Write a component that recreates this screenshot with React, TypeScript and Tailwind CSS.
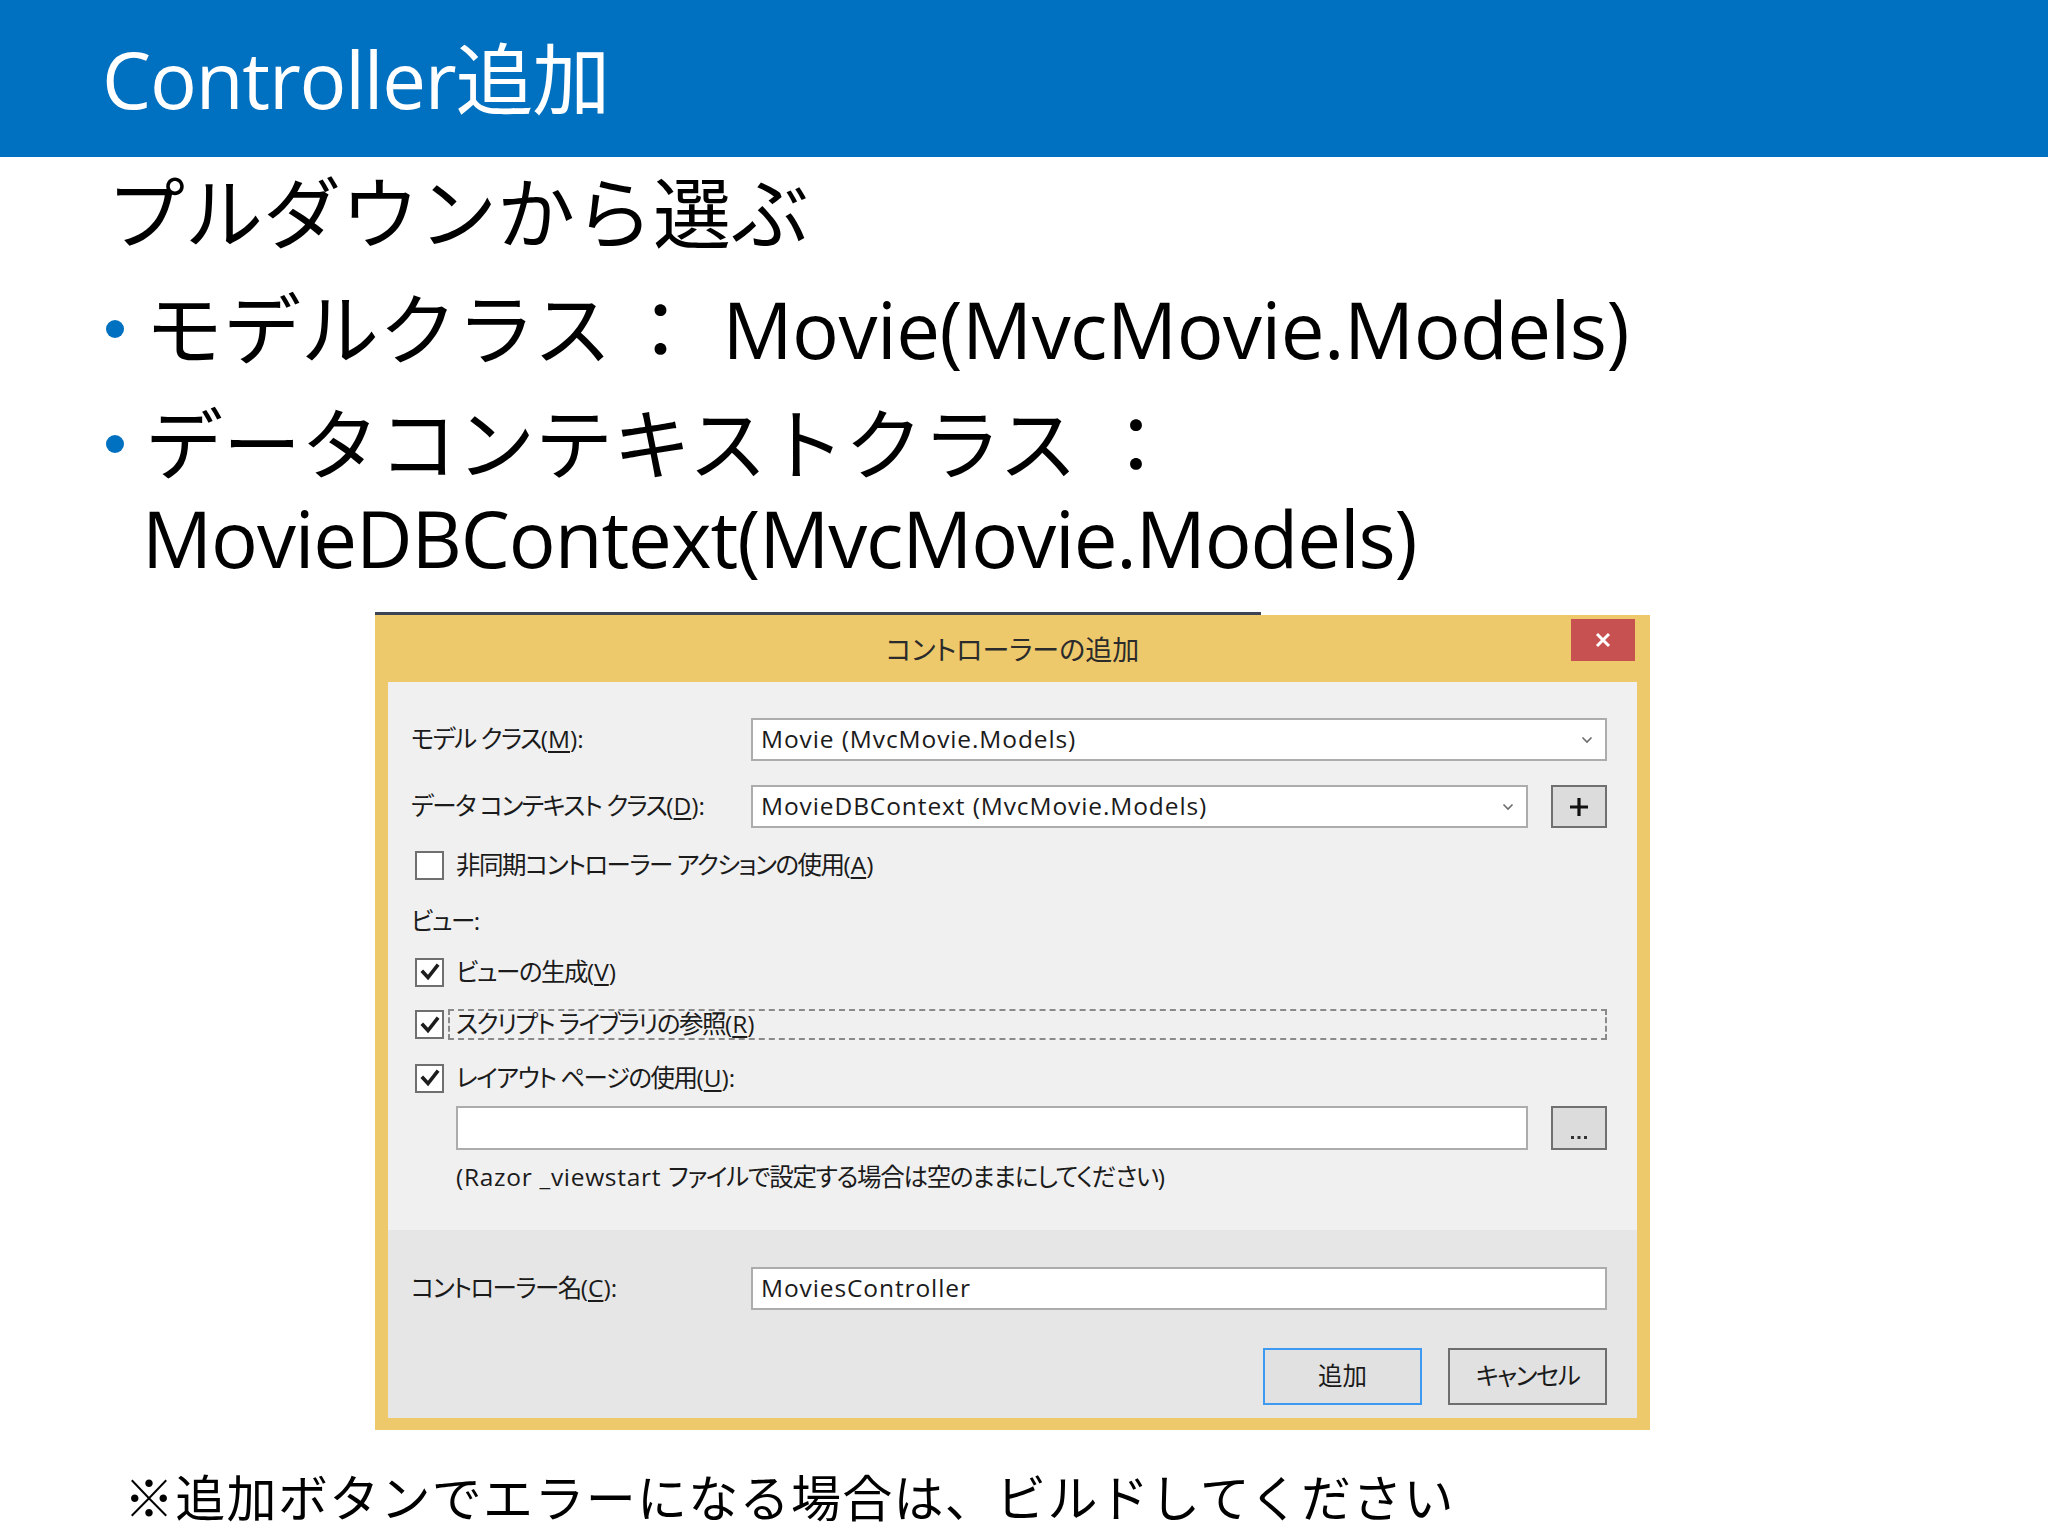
import React from "react";

const dlgFont = "font-['Open_Sans','Noto_Sans_CJK_JP',sans-serif] [font-feature-settings:'palt']";

function Chevron() {
  return (
    <svg width="12" height="8" viewBox="0 0 12 8" className="shrink-0">
      <path d="M1.5 1.5 L6 6 L10.5 1.5" fill="none" stroke="#6b6b6b" strokeWidth="1.6" />
    </svg>
  );
}

function Combo({ text, className }: { text: string; className: string }) {
  return (
    <div className={`h-[43px] bg-white border-2 border-[#acacac] flex items-center pl-[8px] pr-[12px] ${className}`}>
      <span className="flex-1 text-[24.5px] text-[#1b1b1b] leading-none tracking-[0.9px]">{text}</span>
      <Chevron />
    </div>
  );
}

function CheckBox({ checked }: { checked: boolean }) {
  return (
    <div className="w-[29px] h-[29px] bg-white border-2 border-[#6f6f6f] flex items-center justify-center shrink-0">
      {checked && (
        <svg width="20" height="18" viewBox="0 0 20 18">
          <path d="M3 9 L8 14.5 L17 3" fill="none" stroke="#1d1d1d" strokeWidth="3.6" strokeLinecap="square" />
        </svg>
      )}
    </div>
  );
}

function U({ c }: { c: string }) {
  return <span className="underline underline-offset-[3px] decoration-[1.5px]">{c}</span>;
}

function J({ children }: { children: React.ReactNode }) {
  return <span className="tracking-[-1.5px]">{children}</span>;
}

export default function App() {
  return (
    <div className="w-[2048px] h-[1536px] bg-white overflow-hidden font-['Open_Sans','Noto_Sans_CJK_JP',sans-serif] text-black">
      {/* Header */}
      <div className="h-[157px] bg-[#0070c0] flex items-center pl-[102px]">
        <h1 className="text-white text-[78px] leading-none tracking-[-1.2px]">Controller追加</h1>
      </div>

      {/* Body text */}
      <div className="pl-[107px] mt-[9px] text-[78px] leading-[94px]">プルダウンから選ぶ</div>

      <div className="pl-[105px] mt-[22px] flex text-[78px] leading-[94px]">
        <div className="w-[40px] h-[94px] flex items-center shrink-0">
          <div className="w-[18px] h-[18px] rounded-full bg-[#0070c0] ml-[1px]" />
        </div>
        <div className="flex h-[94px]">
          <span className="inline-block h-[94px]">モデルクラス</span>
          <span className="inline-block h-[94px] ml-[10px]">：</span>
          <span className="inline-block h-[94px] ml-[23px] tracking-[-0.5px]">Movie(MvcMovie.Models)</span>
        </div>
      </div>

      <div className="pl-[105px] mt-[21px] flex text-[78px] leading-[94px]">
        <div className="w-[40px] h-[94px] flex items-center shrink-0">
          <div className="w-[18px] h-[18px] rounded-full bg-[#0070c0] ml-[1px]" />
        </div>
        <div>
          <div className="flex h-[94px]">
            <span className="inline-block h-[94px]">データコンテキストクラス</span>
            <span className="inline-block h-[94px] ml-[20px]">：</span>
          </div>
          <div className="-ml-[3px] h-[94px] tracking-[-1.1px]">MovieDBContext(MvcMovie.Models)</div>
        </div>
      </div>

      {/* Dialog */}
      <div className="ml-[375px] mt-[30px] w-[1275px] relative">
        <div className="absolute -top-[3px] left-0 w-[886px] h-[3px] bg-[#3c4354]" />
        <div className={`bg-[#edc96b] ${dlgFont} text-[#1b1b1b]`}>
          {/* title bar */}
          <div className="h-[67px] relative flex items-center justify-center">
            <span className="text-[27px] text-[#2b2b2b] mt-[2px] font-['Noto_Sans_CJK_JP',sans-serif]">コントローラーの追加</span>
            <div className="absolute top-[4px] right-[15px] w-[64px] h-[42px] bg-[#c75050] flex items-center justify-center">
              <svg width="16" height="16" viewBox="0 0 16 16">
                <path d="M2 2 L14 14 M14 2 L2 14" stroke="white" strokeWidth="3" />
              </svg>
            </div>
          </div>

          <div className="mx-[13px] pb-[12px]">
            {/* upper area */}
            <div className="bg-[#f0f0f0] h-[548px] pl-[23px] pr-[30px] pt-[36px] text-[24.5px]">
              <div className="flex items-center h-[43px]">
                <div className="w-[340px] shrink-0">
                  <J>モデル クラス</J>(<U c="M" />):
                </div>
                <Combo text="Movie (MvcMovie.Models)" className="flex-1" />
              </div>

              <div className="flex items-center h-[43px] mt-[24px]">
                <div className="w-[340px] shrink-0">
                  <J>データ コンテキスト クラス</J>(<U c="D" />):
                </div>
                <Combo text="MovieDBContext (MvcMovie.Models)" className="flex-1" />
                <div className="w-[56px] h-[43px] ml-[23px] bg-[#dcdcdc] border-2 border-[#707070] flex items-center justify-center shrink-0">
                  <svg width="20" height="20" viewBox="0 0 20 20">
                    <path d="M10 1 V19 M1 10 H19" stroke="#111" strokeWidth="3.2" />
                  </svg>
                </div>
              </div>

              <div className="flex items-center h-[30px] mt-[22px] pl-[4px]">
                <CheckBox checked={false} />
                <span className="ml-[12px]">
                  <J>非同期コントローラー アクションの使用</J>(<U c="A" />)
                </span>
              </div>

              <div className="h-[30px] mt-[26px] flex items-center">
                <span>
                  <J>ビュー</J>:
                </span>
              </div>

              <div className="flex items-center h-[30px] mt-[21px] pl-[4px]">
                <CheckBox checked={true} />
                <span className="ml-[12px]">
                  <J>ビューの生成</J>(<U c="V" />)
                </span>
              </div>

              <div className="flex items-center h-[31px] mt-[22px] pl-[4px]">
                <CheckBox checked={true} />
                <div className="flex-1 h-[31px] border-2 border-dashed border-[#8a8a8a] flex items-center ml-[4px] pl-[6px]">
                  <span>
                    <J>スクリプト ライブラリの参照</J>(<U c="R" />)
                  </span>
                </div>
              </div>

              <div className="flex items-center h-[30px] mt-[23px] pl-[4px]">
                <CheckBox checked={true} />
                <span className="ml-[12px]">
                  <J>レイアウト ページの使用</J>(<U c="U" />):
                </span>
              </div>

              <div className="flex items-center mt-[13px] pl-[45px]">
                <div className="flex-1 h-[44px] bg-white border-2 border-[#acacac]" />
                <div className="w-[56px] h-[44px] ml-[23px] bg-[#dcdcdc] border-2 border-[#707070] flex items-end justify-center pb-[8px] shrink-0">
                  <svg width="18" height="4" viewBox="0 0 18 4">
                    <rect x="1" y="0" width="3" height="3" fill="#333" />
                    <rect x="7.5" y="0" width="3" height="3" fill="#333" />
                    <rect x="14" y="0" width="3" height="3" fill="#333" />
                  </svg>
                </div>
              </div>

              <div className="pl-[45px] mt-[12px] h-[30px] flex items-center">
                <span>
                  <span className="tracking-[0.7px]">(Razor _viewstart </span>
                  <span className="tracking-[-1.3px]">ファイルで設定する場合は空のままにしてください</span>)
                </span>
              </div>
            </div>

            {/* footer */}
            <div className="bg-[#e6e6e6] h-[188px] pl-[23px] pr-[30px] pt-[37px] text-[24.5px]">
              <div className="flex items-center h-[43px]">
                <div className="w-[340px] shrink-0">
                  <J>コントローラー名</J>(<U c="C" />):
                </div>
                <div className="flex-1 h-[43px] bg-white border-2 border-[#acacac] flex items-center pl-[8px] tracking-[0.9px]">
                  MoviesController
                </div>
              </div>
              <div className="flex justify-end gap-[26px] mt-[38px]">
                <div className="w-[159px] h-[57px] bg-[#e1e1e1] border-2 border-[#3d9af0] flex items-center justify-center">
                  追加
                </div>
                <div className="w-[159px] h-[57px] bg-[#e1e1e1] border-2 border-[#6e6e6e] flex items-center justify-center">
                  <J>キャンセル</J>
                </div>
              </div>
            </div>
          </div>
        </div>
      </div>

      {/* Note */}
      <div className="pl-[124px] mt-[35px] text-[50px] leading-[60px] tracking-[1.3px] font-['Noto_Sans_CJK_JP',sans-serif]">
        ※追加ボタンでエラーになる場合は、ビルドしてください
      </div>
    </div>
  );
}
